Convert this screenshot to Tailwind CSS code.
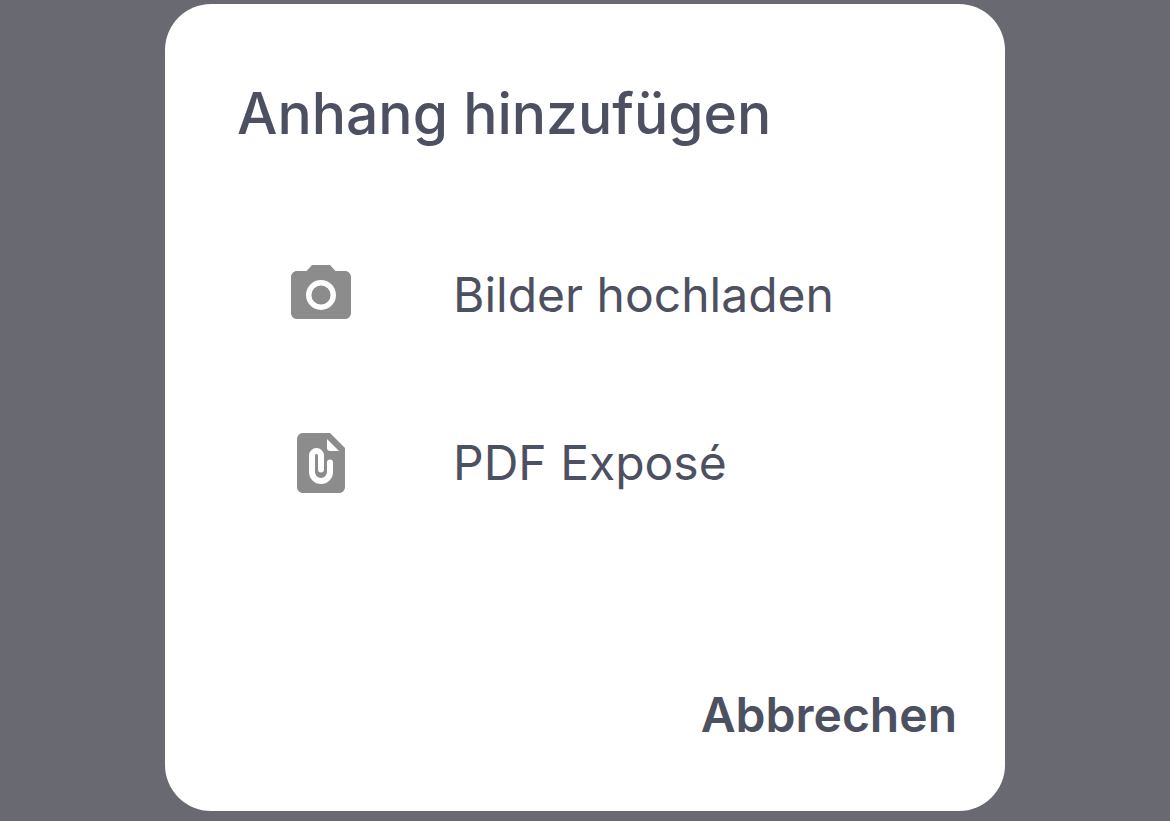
<!DOCTYPE html>
<html lang="de">
<head>
    <meta charset="UTF-8">
    <meta name="viewport" content="width=device-width, initial-scale=1.0">
    <title>Anhang hinzufügen</title>
    <!-- Tailwind CSS CDN -->
    <script src="https://cdn.jsdelivr.net/npm/@tailwindcss/browser@4"></script>
</head>
<body class="min-h-screen bg-[#696972] px-4 pt-1 pb-2 font-['Inter','Liberation_Sans',sans-serif] text-[#4d5060]">
    <div role="dialog" aria-labelledby="dialog-title" class="mx-auto w-full max-w-[840px] rounded-[46px] bg-white pt-[72px] pb-[66px]">
        <h1 id="dialog-title" class="px-[72px] text-[57px] leading-[76px] font-medium">Anhang hinzufügen</h1>

        <ul class="mt-[59px]">
            <li>
                <button type="button" class="flex h-[168px] w-full items-center gap-24 pl-[120px] text-left text-[48px] leading-[60px]">
                    <!-- Camera -->
                    <svg class="size-[72px] shrink-0" viewBox="0 0 24 24" fill="#8c8c8c" aria-hidden="true">
                        <path d="M9 2 7.17 4H4c-1.1 0-2 .9-2 2v12c0 1.1.9 2 2 2h16c1.1 0 2-.9 2-2V6c0-1.1-.9-2-2-2h-3.17L15 2z"/>
                        <circle cx="12" cy="12" r="4.1" fill="none" stroke="#fff" stroke-width="1.8"/>
                    </svg>
                    <span>Bilder hochladen</span>
                </button>
            </li>
            <li>
                <button type="button" class="flex h-[168px] w-full items-center gap-24 pl-[120px] text-left text-[48px] leading-[60px]">
                    <!-- File with paper clip -->
                    <svg class="size-[72px] shrink-0" viewBox="0 0 24 24" fill="#8c8c8c" aria-hidden="true">
                        <path d="M15 2H6c-1.1 0-2 .9-2 2v16c0 1.1.9 2 2 2h12c1.1 0 2-.9 2-2V7z"/>
                        <path d="M14 4v3c0 .6.4 1 1 1h3z" fill="#fff"/>
                        <path d="M12 14.2V9.5a1.5 1.5 0 0 0-3 0V15a3 3 0 0 0 6 0v-3.2" fill="none" stroke="#fff" stroke-width="2" stroke-linecap="round"/>
                    </svg>
                    <span>PDF Exposé</span>
                </button>
            </li>
        </ul>

        <div class="mt-[138px] flex justify-end px-12">
            <button type="button" class="text-[48px] leading-[60px] font-semibold">Abbrechen</button>
        </div>
    </div>
</body>
</html>
